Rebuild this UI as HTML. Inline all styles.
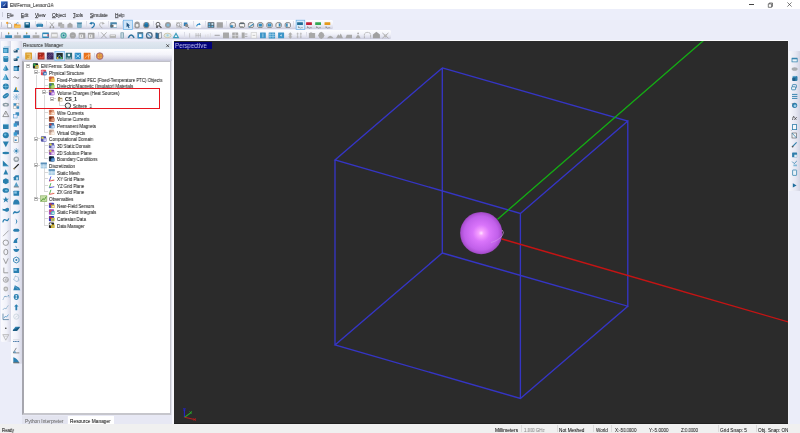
<!DOCTYPE html><html><head><meta charset="utf-8"><title>EMFerma_Lesson1A</title><style>
*{margin:0;padding:0;box-sizing:border-box}
html,body{width:800px;height:433px;overflow:hidden}
body{position:relative;background:#ebedf9;font-family:"Liberation Sans",sans-serif;color:#000}
.a{position:absolute}
.t{position:absolute;white-space:nowrap;line-height:1;transform-origin:0 0;will-change:transform;text-shadow:0 0.45px 0.35px rgba(0,0,0,.28)}
svg{position:absolute;overflow:visible}
</style></head><body>
<div class="a" style="left:0px;top:0px;width:800px;height:9.3px;background:#fff;"></div>
<svg style="left:0;top:0" width="10" height="10"><defs><linearGradient id="ti" x1="0" y1="0" x2="1" y2="1"><stop offset="0" stop-color="#3f7ad6"/><stop offset="1" stop-color="#0b1f66"/></linearGradient></defs><rect x="1" y="1.4" width="6.6" height="6.6" fill="url(#ti)"/><path d="M2.6 6.3L6.2 2.8L4.4 5.8Z" fill="#dfeaff"/></svg>
<div class="t" style="left:10.1px;top:3px;font-size:5.0px;transform:scaleX(0.924);color:#2a2a2a;">EMFerma_Lesson1A</div>
<div class="a" style="left:749.4px;top:4.3px;width:4.4px;height:0.7px;background:#444;"></div>
<svg style="left:767px;top:2px" width="7" height="6"><path d="M1.3 1.9h3.3v3.4h-3.3z M2.2 1.9v-0.9h3.3v3.4h-0.9" fill="none" stroke="#3a3a3a" stroke-width="0.65"/></svg>
<svg style="left:787px;top:2.3px" width="6" height="6"><path d="M0.4 0.4L4.6 4.6M4.6 0.4L0.4 4.6" stroke="#3a3a3a" stroke-width="0.65"/></svg>
<div class="a" style="left:0px;top:9.3px;width:800px;height:10.7px;background:#eceefa;"></div>
<div class="a" style="left:1.5px;top:11.5px;width:1px;height:5px;background:#cdcedb;"></div>
<div class="t" style="left:7.1px;top:14px;font-size:4.8px;transform:scaleX(0.860);color:#202020;"><span style="text-decoration:underline;text-decoration-thickness:0.4px;text-underline-offset:0.4px;text-decoration-color:rgba(0,0,0,.45)">F</span>ile</div>
<div class="t" style="left:21px;top:14px;font-size:4.8px;transform:scaleX(0.895);color:#202020;"><span style="text-decoration:underline;text-decoration-thickness:0.4px;text-underline-offset:0.4px;text-decoration-color:rgba(0,0,0,.45)">E</span>dit</div>
<div class="t" style="left:34.9px;top:14px;font-size:4.8px;transform:scaleX(1.008);color:#202020;"><span style="text-decoration:underline;text-decoration-thickness:0.4px;text-underline-offset:0.4px;text-decoration-color:rgba(0,0,0,.45)">V</span>iew</div>
<div class="t" style="left:51.75px;top:14px;font-size:4.8px;transform:scaleX(0.998);color:#202020;"><span style="text-decoration:underline;text-decoration-thickness:0.4px;text-underline-offset:0.4px;text-decoration-color:rgba(0,0,0,.45)">O</span>bject</div>
<div class="t" style="left:72.6px;top:14px;font-size:4.8px;transform:scaleX(0.884);color:#202020;"><span style="text-decoration:underline;text-decoration-thickness:0.4px;text-underline-offset:0.4px;text-decoration-color:rgba(0,0,0,.45)">T</span>ools</div>
<div class="t" style="left:89.8px;top:14px;font-size:4.8px;transform:scaleX(0.948);color:#202020;"><span style="text-decoration:underline;text-decoration-thickness:0.4px;text-underline-offset:0.4px;text-decoration-color:rgba(0,0,0,.45)">S</span>imulate</div>
<div class="t" style="left:114.5px;top:14px;font-size:4.8px;transform:scaleX(0.942);color:#202020;"><span style="text-decoration:underline;text-decoration-thickness:0.4px;text-underline-offset:0.4px;text-decoration-color:rgba(0,0,0,.45)">H</span>elp</div>
<div class="a" style="left:0px;top:19.9px;width:333px;height:9.4px;background:linear-gradient(#fdfdff,#f2f3fa 45%,#e0e1ee 75%,#c9cadc);border-radius:0 1.5px 1.5px 0"></div>
<div class="a" style="left:1.2px;top:21.7px;width:0.9px;height:5.800000000000001px;background:#c5c6d4;"></div>
<div class="a" style="left:0px;top:30.1px;width:390.5px;height:9.3px;background:linear-gradient(#fdfdff,#f2f3fa 45%,#e0e1ee 75%,#c9cadc);border-radius:0 1.5px 1.5px 0"></div>
<div class="a" style="left:1.2px;top:31.900000000000002px;width:0.9px;height:5.700000000000001px;background:#c5c6d4;"></div>
<div class="a" style="left:35px;top:21.4px;width:0.6px;height:6.6px;background:#dcdde7;"></div>
<div class="a" style="left:46px;top:21.4px;width:0.6px;height:6.6px;background:#dcdde7;"></div>
<div class="a" style="left:85.5px;top:21.4px;width:0.6px;height:6.6px;background:#dcdde7;"></div>
<div class="a" style="left:107.5px;top:21.4px;width:0.6px;height:6.6px;background:#dcdde7;"></div>
<div class="a" style="left:121.75px;top:21.4px;width:0.6px;height:6.6px;background:#dcdde7;"></div>
<div class="a" style="left:152.9px;top:21.4px;width:0.6px;height:6.6px;background:#dcdde7;"></div>
<div class="a" style="left:192.6px;top:21.4px;width:0.6px;height:6.6px;background:#dcdde7;"></div>
<div class="a" style="left:205.4px;top:21.4px;width:0.6px;height:6.6px;background:#dcdde7;"></div>
<div class="a" style="left:226.4px;top:21.4px;width:0.6px;height:6.6px;background:#dcdde7;"></div>
<div class="a" style="left:292.5px;top:21.4px;width:0.6px;height:6.6px;background:#dcdde7;"></div>
<div class="a" style="left:97.75px;top:31.6px;width:0.6px;height:6.6px;background:#dcdde7;"></div>
<div class="a" style="left:183.6px;top:31.6px;width:0.6px;height:6.6px;background:#dcdde7;"></div>
<div class="a" style="left:306.25px;top:31.6px;width:0.6px;height:6.6px;background:#dcdde7;"></div>
<div class="a" style="left:1px;top:41.3px;width:9.8px;height:300.7px;background:linear-gradient(90deg,#fbfbfe,#f0f1f9 55%,#d6d7e6);border-radius:0 0 1.5px 1.5px"></div>
<div class="a" style="left:3px;top:42.5px;width:5.800000000000001px;height:0.7px;background:repeating-linear-gradient(90deg,#b8b9c8 0 0.8px,transparent 0.8px 1.6px);"></div>
<div class="a" style="left:11.1px;top:41.3px;width:10.6px;height:322.9px;background:linear-gradient(90deg,#fbfbfe,#f0f1f9 55%,#d6d7e6);border-radius:0 0 1.5px 1.5px"></div>
<div class="a" style="left:13.1px;top:42.5px;width:6.6px;height:0.7px;background:repeating-linear-gradient(90deg,#b8b9c8 0 0.8px,transparent 0.8px 1.6px);"></div>
<div class="a" style="left:21.6px;top:41px;width:151px;height:383.4px;background:#e7e8f4;"></div>
<div class="a" style="left:21.6px;top:41.5px;width:150.6px;height:7.6px;background:linear-gradient(#e0e8f1,#d6e0ea);"></div>
<div class="t" style="left:23px;top:43px;font-size:5.0px;transform:scaleX(0.941);color:#333333;">Resource Manager</div>
<svg style="left:166px;top:43.6px" width="4" height="4"><path d="M0.3 0.3L3.1 3.1M3.1 0.3L0.3 3.1" stroke="#222" stroke-width="0.7"/></svg>
<div class="a" style="left:22.4px;top:49.1px;width:149.4px;height:12.2px;background:linear-gradient(#fdfdff,#f4f4fa 45%,#dcdce9 80%,#c6c6d9);"></div>
<div class="a" style="left:35px;top:52.5px;width:0.7px;height:7px;background:#d6d6e2;"></div>
<div class="a" style="left:93.5px;top:52.5px;width:0.7px;height:7px;background:#d6d6e2;"></div>
<div class="a" style="left:22.2px;top:61.2px;width:148.4px;height:353.6px;background:#fff;border-left:2.3px solid #a6a6ae;border-top:0.8px solid #c0c0c8;border-bottom:2.2px solid #c6c6cc;border-right:0.9px solid #c4c4cc"></div>
<div class="a" style="left:170.6px;top:61px;width:1.6px;height:354px;background:linear-gradient(90deg,#e6e7f1,#d9dae6);"></div>
<div class="a" style="left:36px;top:75px;width:1px;height:122px;background:#dadada;"></div>
<div class="a" style="left:44px;top:95px;width:1px;height:38px;background:#dadada;"></div>
<div class="a" style="left:44px;top:142px;width:1px;height:17px;background:#dadada;"></div>
<div class="a" style="left:44px;top:168px;width:1px;height:24px;background:#dadada;"></div>
<div class="a" style="left:44px;top:202px;width:1px;height:24px;background:#dadada;"></div>
<div class="a" style="left:44px;top:75px;width:1px;height:15px;background:#dadada;"></div>
<div class="a" style="left:59px;top:101px;width:1px;height:5px;background:#dadada;"></div>
<div class="a" style="left:25.75px;top:63.7px;width:4.1px;height:4.1px;background:#fff;border:0.55px solid #c2c2c2"></div>
<div class="a" style="left:26.7px;top:65.45px;width:2.3px;height:0.6px;background:#8c8c8c;"></div>
<div class="t" style="left:41px;top:65px;font-size:4.7px;transform:scaleX(0.925);color:#1c1c1c;">EM Ferma: Static Module</div>
<div class="a" style="left:38px;top:72px;width:2px;height:1px;background:#d8d8d8;"></div>
<div class="a" style="left:33.75px;top:70.34400000000001px;width:4.1px;height:4.1px;background:#fff;border:0.55px solid #c2c2c2"></div>
<div class="a" style="left:34.699999999999996px;top:72.09400000000001px;width:2.3px;height:0.6px;background:#8c8c8c;"></div>
<div class="t" style="left:49px;top:72px;font-size:4.7px;transform:scaleX(0.925);color:#1c1c1c;">Physical Structure</div>
<div class="a" style="left:44px;top:79px;width:4px;height:1px;background:#d8d8d8;"></div>
<div class="t" style="left:57px;top:79px;font-size:4.7px;transform:scaleX(0.925);color:#1c1c1c;">Fixed-Potential PEC (Fixed-Temperature PTC) Objects</div>
<div class="a" style="left:44px;top:85px;width:4px;height:1px;background:#d8d8d8;"></div>
<div class="t" style="left:57px;top:85px;font-size:4.7px;transform:scaleX(0.925);color:#1c1c1c;">Dielectric/Magnetic (Insulator) Materials</div>
<div class="a" style="left:46px;top:92px;width:2px;height:1px;background:#d8d8d8;"></div>
<div class="a" style="left:41.75px;top:90.276px;width:4.1px;height:4.1px;background:#fff;border:0.55px solid #c2c2c2"></div>
<div class="a" style="left:42.699999999999996px;top:92.026px;width:2.3px;height:0.6px;background:#8c8c8c;"></div>
<div class="t" style="left:57px;top:92px;font-size:4.7px;transform:scaleX(0.925);color:#1c1c1c;">Volume Charges (Heat Sources)</div>
<div class="a" style="left:54px;top:98px;width:2px;height:1px;background:#d8d8d8;"></div>
<div class="a" style="left:49.75px;top:96.92px;width:4.1px;height:4.1px;background:#fff;border:0.55px solid #c2c2c2"></div>
<div class="a" style="left:50.699999999999996px;top:98.67px;width:2.3px;height:0.6px;background:#8c8c8c;"></div>
<div class="t" style="left:65px;top:97px;font-size:5.2px;transform:scaleX(0.9225579842108044);color:#1c1c1c;font-weight:bold;">CS_1</div>
<div class="a" style="left:60px;top:105px;width:5px;height:1px;background:#d8d8d8;"></div>
<div class="t" style="left:73px;top:105px;font-size:4.7px;transform:scaleX(0.925);color:#1c1c1c;">Sphere_1</div>
<div class="a" style="left:44px;top:112px;width:4px;height:1px;background:#d8d8d8;"></div>
<div class="t" style="left:57px;top:112px;font-size:4.7px;transform:scaleX(0.925);color:#1c1c1c;">Wire Currents</div>
<div class="a" style="left:44px;top:118px;width:4px;height:1px;background:#d8d8d8;"></div>
<div class="t" style="left:57px;top:118px;font-size:4.7px;transform:scaleX(0.925);color:#1c1c1c;">Volume Currents</div>
<div class="a" style="left:44px;top:125px;width:4px;height:1px;background:#d8d8d8;"></div>
<div class="t" style="left:57px;top:125px;font-size:4.7px;transform:scaleX(0.925);color:#1c1c1c;">Permanent Magnets</div>
<div class="a" style="left:44px;top:132px;width:4px;height:1px;background:#d8d8d8;"></div>
<div class="t" style="left:57px;top:132px;font-size:4.7px;transform:scaleX(0.925);color:#1c1c1c;">Virtual Objects</div>
<div class="a" style="left:38px;top:138px;width:2px;height:1px;background:#d8d8d8;"></div>
<div class="a" style="left:33.75px;top:136.784px;width:4.1px;height:4.1px;background:#fff;border:0.55px solid #c2c2c2"></div>
<div class="a" style="left:34.699999999999996px;top:138.534px;width:2.3px;height:0.6px;background:#8c8c8c;"></div>
<div class="t" style="left:49px;top:138px;font-size:4.7px;transform:scaleX(0.925);color:#1c1c1c;">Computational Domain</div>
<div class="a" style="left:44px;top:145px;width:4px;height:1px;background:#d8d8d8;"></div>
<div class="t" style="left:57px;top:145px;font-size:4.7px;transform:scaleX(0.925);color:#1c1c1c;">3D Static Domain</div>
<div class="a" style="left:44px;top:152px;width:4px;height:1px;background:#d8d8d8;"></div>
<div class="t" style="left:57px;top:152px;font-size:4.7px;transform:scaleX(0.925);color:#1c1c1c;">2D Solution Plane</div>
<div class="a" style="left:44px;top:158px;width:4px;height:1px;background:#d8d8d8;"></div>
<div class="t" style="left:57px;top:158px;font-size:4.7px;transform:scaleX(0.925);color:#1c1c1c;">Boundary Conditions</div>
<div class="a" style="left:38px;top:165px;width:2px;height:1px;background:#d8d8d8;"></div>
<div class="a" style="left:33.75px;top:163.35999999999999px;width:4.1px;height:4.1px;background:#fff;border:0.55px solid #c2c2c2"></div>
<div class="a" style="left:34.699999999999996px;top:165.10999999999999px;width:2.3px;height:0.6px;background:#8c8c8c;"></div>
<div class="t" style="left:49px;top:165px;font-size:4.7px;transform:scaleX(0.925);color:#1c1c1c;">Discretization</div>
<div class="a" style="left:44px;top:172px;width:4px;height:1px;background:#d8d8d8;"></div>
<div class="t" style="left:57px;top:172px;font-size:4.7px;transform:scaleX(0.925);color:#1c1c1c;">Static Mesh</div>
<div class="a" style="left:44px;top:178px;width:4px;height:1px;background:#d8d8d8;"></div>
<div class="t" style="left:57px;top:178px;font-size:4.7px;transform:scaleX(0.925);color:#1c1c1c;">XY Grid Plane</div>
<div class="a" style="left:44px;top:185px;width:4px;height:1px;background:#d8d8d8;"></div>
<div class="t" style="left:57px;top:185px;font-size:4.7px;transform:scaleX(0.925);color:#1c1c1c;">YZ Grid Plane</div>
<div class="a" style="left:44px;top:191px;width:4px;height:1px;background:#d8d8d8;"></div>
<div class="t" style="left:57px;top:191px;font-size:4.7px;transform:scaleX(0.925);color:#1c1c1c;">ZX Grid Plane</div>
<div class="a" style="left:38px;top:198px;width:2px;height:1px;background:#d8d8d8;"></div>
<div class="a" style="left:33.75px;top:196.57999999999998px;width:4.1px;height:4.1px;background:#fff;border:0.55px solid #c2c2c2"></div>
<div class="a" style="left:34.699999999999996px;top:198.32999999999998px;width:2.3px;height:0.6px;background:#8c8c8c;"></div>
<div class="t" style="left:49px;top:198px;font-size:4.7px;transform:scaleX(0.925);color:#1c1c1c;">Observables</div>
<div class="a" style="left:44px;top:205px;width:4px;height:1px;background:#d8d8d8;"></div>
<div class="t" style="left:57px;top:205px;font-size:4.7px;transform:scaleX(0.925);color:#1c1c1c;">Near-Field Sensors</div>
<div class="a" style="left:44px;top:211px;width:4px;height:1px;background:#d8d8d8;"></div>
<div class="t" style="left:57px;top:211px;font-size:4.7px;transform:scaleX(0.925);color:#1c1c1c;">Static Field Integrals</div>
<div class="a" style="left:44px;top:218px;width:4px;height:1px;background:#d8d8d8;"></div>
<div class="t" style="left:57px;top:218px;font-size:4.7px;transform:scaleX(0.925);color:#1c1c1c;">Cartesian Data</div>
<div class="a" style="left:44px;top:225px;width:4px;height:1px;background:#d8d8d8;"></div>
<div class="t" style="left:57px;top:225px;font-size:4.7px;transform:scaleX(0.925);color:#1c1c1c;">Data Manager</div>
<div class="a" style="left:35.2px;top:88.1px;width:124.4px;height:20.8px;background:transparent;border:1.3px solid #e8141e"></div>
<div class="a" style="left:22.4px;top:416.4px;width:44.6px;height:7.6px;background:#e3e4ef;"></div>
<div class="t" style="left:25px;top:420px;font-size:4.6px;transform:scaleX(1.046);color:#7a7a7a;">Python Interpreter</div>
<div class="a" style="left:68px;top:416.2px;width:45.6px;height:7.9px;background:#fff;"></div>
<div class="t" style="left:70px;top:420px;font-size:4.8px;transform:scaleX(0.992);color:#151515;">Resource Manager</div>
<div class="a" style="left:172.2px;top:41px;width:1.9px;height:383px;background:#f7f7fc;"></div>
<div class="a" style="left:172.2px;top:40.1px;width:616px;height:0.9px;background:#fafafd;"></div>
<div class="a" style="left:174px;top:40.9px;width:614.2px;height:382.7px;background:#2b2b2b;"></div>
<div class="a" style="left:174px;top:422.6px;width:614.2px;height:1px;background:#202020;"></div>
<div class="a" style="left:174px;top:42px;width:38px;height:6.9px;background:#000078;"></div>
<div class="t" style="left:174.5px;top:43px;font-size:6.3px;transform:scaleX(0.960);color:#c4c4f2;text-shadow:none;">Perspective</div>
<svg style="left:174px;top:41px;overflow:hidden" width="614.2" height="382.6" viewBox="174 41 614.2 382.6">
<defs>
<radialGradient id="sg" cx="0.5" cy="0.5" r="0.5">
<stop offset="0" stop-color="#ffe4ff"/>
<stop offset="0.12" stop-color="#f6a2ff"/>
<stop offset="0.4" stop-color="#d974fa"/>
<stop offset="0.8" stop-color="#c160ea"/>
<stop offset="0.94" stop-color="#ac50d2"/>
<stop offset="1" stop-color="#9646b8"/>
</radialGradient>
</defs>
<g fill="none" stroke-width="1.35" stroke-linecap="round">
<path d="M442.3 67.9L627.8 121L520.4 213.4L335 160Z M442.3 253L627.8 306.2L520.4 398.4L335 345Z M442.3 67.9V253 M627.8 121V306.2 M520.4 213.4V398.4 M335 160V345" stroke="#3535c4"/>
<path d="M497.9 219L703 41" stroke="#14ac14"/>
<path d="M502 239L790 322.5" stroke="#c41414"/>
</g>
<circle cx="481.2" cy="233.1" r="21.1" fill="url(#sg)"/>
<path d="M502.2 230 Q504.6 232.4 502.4 235.4 Q499 240.2 491 242.6" stroke="#d496ea" stroke-width="0.9" fill="none" opacity="0.75"/>
</svg>
<svg style="left:180px;top:405px" width="20" height="18" viewBox="0 0 20 18">
<path d="M4.4 4.2V12.3" stroke="#2424c8" stroke-width="1.1"/><path d="M3 3.8H5.8M3.4 5.2H5.4" stroke="#2424c8" stroke-width="0.9"/>
<path d="M4.6 12.3L11.4 7.4" stroke="#2aa82a" stroke-width="1.1"/><path d="M9.6 6.4L11.6 8.6M11.8 6.2L9.4 8.8" stroke="#2aa82a" stroke-width="0.8"/>
<path d="M4.6 12.3L15.6 14.8" stroke="#b41e1e" stroke-width="1.1"/><path d="M13.6 13.2L15.8 15.8M15.8 13.2L13.6 15.8" stroke="#b41e1e" stroke-width="0.8"/>
</svg>
<div class="a" style="left:788.2px;top:41px;width:1px;height:383.5px;background:#f3f3f8;"></div>
<div class="a" style="left:789.2px;top:51.4px;width:10.8px;height:139.4px;background:linear-gradient(90deg,#f6f7fc,#e6e7f2 60%,#d3d4e3);"></div>
<div class="a" style="left:791px;top:52.6px;width:8px;height:0.7px;background:repeating-linear-gradient(90deg,#b8b9c8 0 0.8px,transparent 0.8px 1.6px);"></div>
<div class="a" style="left:0px;top:424.3px;width:800px;height:8.7px;background:#f0f0f0;"></div>
<div class="t" style="left:2px;top:429px;font-size:4.8px;transform:scaleX(0.865);color:#111111;">Ready</div>
<div class="t" style="left:495.3px;top:429px;font-size:4.6px;transform:scaleX(1.051);color:#111111;">Millimeters</div>
<div class="t" style="left:523.7px;top:429px;font-size:4.6px;transform:scaleX(0.932);color:#9a9a9a;">1.000 GHz</div>
<div class="t" style="left:559px;top:429px;font-size:4.6px;transform:scaleX(1.028);color:#111111;">Not Meshed</div>
<div class="t" style="left:595.6px;top:429px;font-size:4.6px;transform:scaleX(0.998);color:#262626;">World</div>
<div class="t" style="left:615px;top:429px;font-size:4.6px;transform:scaleX(0.955);color:#262626;">X:-50.0000</div>
<div class="t" style="left:649px;top:429px;font-size:4.6px;transform:scaleX(0.990);color:#262626;">Y:-5.0000</div>
<div class="t" style="left:681px;top:429px;font-size:4.6px;transform:scaleX(0.942);color:#262626;">Z:0.0000</div>
<div class="t" style="left:720px;top:429px;font-size:4.6px;transform:scaleX(1.042);color:#262626;">Grid Snap: 5</div>
<div class="t" style="left:758px;top:429px;font-size:4.6px;transform:scaleX(1.020);color:#262626;">Obj. Snap: ON</div>
<div class="a" style="left:521px;top:425.3px;width:0.7px;height:7.2px;background:#dadada;"></div>
<div class="a" style="left:557px;top:425.3px;width:0.7px;height:7.2px;background:#dadada;"></div>
<div class="a" style="left:593px;top:425.3px;width:0.7px;height:7.2px;background:#dadada;"></div>
<div class="a" style="left:611px;top:425.3px;width:0.7px;height:7.2px;background:#dadada;"></div>
<div class="a" style="left:718px;top:425.3px;width:0.7px;height:7.2px;background:#dadada;"></div>
<div class="a" style="left:755.6px;top:425.3px;width:0.7px;height:7.2px;background:#dadada;"></div>
<div class="t" style="left:792px;top:116px;font-size:5.2px;transform:scaleX(1.261);color:#333;font-style:italic;text-shadow:none;">fx</div>
<svg style="left:0;top:0" width="800" height="433" viewBox="0 0 800 433"><rect x="32.90" y="63.15" width="5.2" height="5.4" rx="0.8" fill="#1c2a28"/><rect x="34.90" y="64.95" width="3.8" height="3.6" rx="0.6" fill="#e0c040" opacity=".9"/><circle cx="34.50" cy="64.75" r="1.2" fill="#30b050" opacity=".9"/><circle cx="37.10" cy="67.05" r="0.9" fill="#90c0e0" opacity=".8"/><rect x="40.90" y="69.79" width="5.2" height="5.4" rx="0.8" fill="#e04858"/><rect x="42.90" y="71.59" width="3.8" height="3.6" rx="0.6" fill="#2a7ac0" opacity=".9"/><circle cx="42.50" cy="71.39" r="1.2" fill="#f0a0b0" opacity=".9"/><circle cx="45.10" cy="73.69" r="0.9" fill="#ffffff" opacity=".8"/><rect x="48.90" y="76.44" width="5.2" height="5.4" rx="0.8" fill="#d87838"/><rect x="50.90" y="78.24" width="3.8" height="3.6" rx="0.6" fill="#f0c040" opacity=".9"/><circle cx="50.50" cy="78.04" r="1.2" fill="#c05050" opacity=".9"/><circle cx="53.10" cy="80.34" r="0.9" fill="#f8d0a0" opacity=".8"/><rect x="48.90" y="83.08" width="5.2" height="5.4" rx="0.8" fill="#60a040"/><rect x="50.90" y="84.88" width="3.8" height="3.6" rx="0.6" fill="#a0d060" opacity=".9"/><circle cx="50.50" cy="84.68" r="1.2" fill="#4060a0" opacity=".9"/><circle cx="53.10" cy="86.98" r="0.9" fill="#c0e080" opacity=".8"/><rect x="48.90" y="89.73" width="5.2" height="5.4" rx="0.8" fill="#6040a0"/><rect x="50.90" y="91.53" width="3.8" height="3.6" rx="0.6" fill="#c080e0" opacity=".9"/><circle cx="50.50" cy="91.33" r="1.2" fill="#e0a040" opacity=".9"/><circle cx="53.10" cy="93.63" r="0.9" fill="#ffffff" opacity=".8"/><rect x="57.90" y="97.77" width="4.4" height="3.6" fill="#a08a60"/><rect x="59.90" y="98.97" width="2.4" height="2.4" fill="#f0ead8"/><rect x="58.30" y="96.97" width="1.6" height="1" fill="#705a3a"/><circle cx="67.90" cy="105.71" r="2.7" fill="#e8ece8" stroke="#2a2f33" stroke-width="0.9"/><circle cx="67.50" cy="105.31" r="1.1" fill="#fafafa"/><rect x="48.90" y="109.66" width="5.2" height="5.4" rx="0.8" fill="#d89070"/><rect x="50.90" y="111.46" width="3.8" height="3.6" rx="0.6" fill="#f0c0a0" opacity=".9"/><circle cx="50.50" cy="111.26" r="1.2" fill="#c06040" opacity=".9"/><circle cx="53.10" cy="113.56" r="0.9" fill="#ffffff" opacity=".8"/><rect x="48.90" y="116.30" width="5.2" height="5.4" rx="0.8" fill="#a85030"/><rect x="50.90" y="118.10" width="3.8" height="3.6" rx="0.6" fill="#d08060" opacity=".9"/><circle cx="50.50" cy="117.90" r="1.2" fill="#703020" opacity=".9"/><circle cx="53.10" cy="120.20" r="0.9" fill="#f0c0a0" opacity=".8"/><rect x="48.90" y="122.95" width="5.2" height="5.4" rx="0.8" fill="#3a6aa0"/><rect x="50.90" y="124.75" width="3.8" height="3.6" rx="0.6" fill="#80b0e0" opacity=".9"/><circle cx="50.50" cy="124.55" r="1.2" fill="#c04040" opacity=".9"/><circle cx="53.10" cy="126.85" r="0.9" fill="#ffffff" opacity=".8"/><rect x="48.90" y="129.59" width="5.2" height="5.4" rx="0.8" fill="#d0b0a0"/><rect x="50.90" y="131.39" width="3.8" height="3.6" rx="0.6" fill="#f0e0d0" opacity=".9"/><circle cx="50.50" cy="131.19" r="1.2" fill="#b09080" opacity=".9"/><circle cx="53.10" cy="133.49" r="0.9" fill="#ffffff" opacity=".8"/><rect x="40.90" y="136.23" width="5.2" height="5.4" rx="0.8" fill="#5050a0"/><rect x="42.90" y="138.03" width="3.8" height="3.6" rx="0.6" fill="#a0a0e0" opacity=".9"/><circle cx="42.50" cy="137.83" r="1.2" fill="#e0e040" opacity=".9"/><circle cx="45.10" cy="140.13" r="0.9" fill="#ffffff" opacity=".8"/><rect x="48.90" y="142.88" width="5.2" height="5.4" rx="0.8" fill="#5050a0"/><rect x="50.90" y="144.68" width="3.8" height="3.6" rx="0.6" fill="#a0a0e0" opacity=".9"/><circle cx="50.50" cy="144.48" r="1.2" fill="#e0e040" opacity=".9"/><circle cx="53.10" cy="146.78" r="0.9" fill="#ffffff" opacity=".8"/><rect x="48.90" y="149.52" width="5.2" height="5.4" rx="0.8" fill="#9050b0"/><rect x="50.90" y="151.32" width="3.8" height="3.6" rx="0.6" fill="#d0a0e0" opacity=".9"/><circle cx="50.50" cy="151.12" r="1.2" fill="#e0e040" opacity=".9"/><circle cx="53.10" cy="153.42" r="0.9" fill="#ffffff" opacity=".8"/><rect x="48.90" y="156.17" width="5.2" height="5.4" rx="0.8" fill="#1a3050"/><rect x="50.90" y="157.97" width="3.8" height="3.6" rx="0.6" fill="#4080c0" opacity=".9"/><circle cx="50.50" cy="157.77" r="1.2" fill="#101820" opacity=".9"/><circle cx="53.10" cy="160.07" r="0.9" fill="#80c0f0" opacity=".8"/><rect x="40.70" y="162.61" width="6.2" height="5.8" fill="#a8cce4"/><rect x="40.70" y="162.61" width="6.2" height="1.6" fill="#5a8fb8"/><path d="M40.70 166.21h6.2M43.80 164.21v4.2" stroke="#e8f2fa" stroke-width="0.5"/><rect x="48.70" y="169.25" width="6.2" height="5.8" fill="#a8cce4"/><rect x="48.70" y="169.25" width="6.2" height="1.6" fill="#5a8fb8"/><path d="M48.70 172.85h6.2M51.80 170.85v4.2" stroke="#e8f2fa" stroke-width="0.5"/><path d="M49.30 181.10L50.90 176.50" stroke="#3030e0" stroke-width="0.8" fill="none"/><path d="M49.30 181.10L54.30 180.10" stroke="#e03030" stroke-width="0.8" fill="none"/><path d="M49.90 179.10l1 1M52.90 179.30l1 1" stroke="#c8b040" stroke-width="0.6" fill="none"/><path d="M49.30 187.74L50.90 183.14" stroke="#30a030" stroke-width="0.8" fill="none"/><path d="M49.30 187.74L54.30 186.74" stroke="#3030e0" stroke-width="0.8" fill="none"/><path d="M49.90 185.74l1 1M52.90 185.94l1 1" stroke="#c8b040" stroke-width="0.6" fill="none"/><path d="M49.30 194.39L50.90 189.79" stroke="#30a030" stroke-width="0.8" fill="none"/><path d="M49.30 194.39L54.30 193.39" stroke="#e03030" stroke-width="0.8" fill="none"/><path d="M49.90 192.39l1 1M52.90 192.59l1 1" stroke="#c8b040" stroke-width="0.6" fill="none"/><rect x="40.70" y="195.83" width="6.2" height="5.8" fill="#c8e0a8" stroke="#6a9a40" stroke-width="0.5"/><path d="M41.30 201.03l1.6-2.4 1.4 1 2-3" stroke="#3a8a20" stroke-width="0.8" fill="none"/><rect x="48.90" y="202.67" width="5.2" height="5.4" rx="0.8" fill="#4040c0"/><rect x="50.90" y="204.47" width="3.8" height="3.6" rx="0.6" fill="#e0c040" opacity=".9"/><circle cx="50.50" cy="204.27" r="1.2" fill="#c04040" opacity=".9"/><circle cx="53.10" cy="206.57" r="0.9" fill="#ffffff" opacity=".8"/><rect x="48.90" y="209.32" width="5.2" height="5.4" rx="0.8" fill="#a050c0"/><rect x="50.90" y="211.12" width="3.8" height="3.6" rx="0.6" fill="#50c0c0" opacity=".9"/><circle cx="50.50" cy="210.92" r="1.2" fill="#e05050" opacity=".9"/><circle cx="53.10" cy="213.22" r="0.9" fill="#ffffff" opacity=".8"/><rect x="48.90" y="215.96" width="5.2" height="5.4" rx="0.8" fill="#3030c0"/><rect x="50.90" y="217.76" width="3.8" height="3.6" rx="0.6" fill="#e0c040" opacity=".9"/><circle cx="50.50" cy="217.56" r="1.2" fill="#c03030" opacity=".9"/><circle cx="53.10" cy="219.86" r="0.9" fill="#60c060" opacity=".8"/><rect x="48.90" y="222.61" width="5.2" height="5.4" rx="0.8" fill="#202020"/><rect x="50.90" y="224.41" width="3.8" height="3.6" rx="0.6" fill="#e0c020" opacity=".9"/><circle cx="50.50" cy="224.21" r="1.2" fill="#ffffff" opacity=".9"/><circle cx="53.10" cy="226.51" r="0.9" fill="#b0b0b0" opacity=".8"/><path d="M7.6 23.2h2.6l1.4 1.4v3.2h-4z" fill="#fff" stroke="#777" stroke-width="0.55"/><circle cx="7.2" cy="22.9" r="1.1" fill="#f0a030" /><path d="M14.2 23.8h2.4l0.6 0.7h3.3v3.2h-6.3z" fill="#e89a2a" /><path d="M15.2 25.6h5.4l-0.8 2.1h-5z" fill="#f6c35a" /><path d="M16.2 23.6q1-1.3 2.4-0.6" fill="none" stroke="#3a86c0" stroke-width="0.7" /><rect x="24.40" y="22.30" width="5.6" height="5.4" rx="0.5" fill="#1a6890"/><rect x="25.70" y="22.80" width="3" height="1.6" rx="0" fill="#cfe3ee"/><rect x="25.50" y="25.80" width="3.4" height="1.6" rx="0" fill="#0f4d6e"/><rect x="37.80" y="22.30" width="3.8" height="1.8" rx="0.2" fill="#dde6ec"/><rect x="36.30" y="23.80" width="6.8" height="3.2" rx="1.2" fill="#2a7aa8"/><rect x="37.20" y="24.50" width="5" height="0.8" rx="0.3" fill="#5aa8d0"/><rect x="37.80" y="26.80" width="3.8" height="1.2" rx="0.2" fill="#f4f6f8"/><path d="M50 22.5L53.8 27M53.8 22.5L50 27" fill="none" stroke="#9a9a9a" stroke-width="0.8" /><circle cx="50.4" cy="27.4" r="0.9" fill="#9a9a9a" /><circle cx="53.4" cy="27.4" r="0.9" fill="#9a9a9a" /><rect x="58.20" y="22.40" width="4" height="4" rx="0.3" fill="#a8a8a8"/><rect x="60.20" y="24.00" width="4" height="4" rx="0.3" fill="#b4b4b4"/><path d="M67.4 24.4l2.6-2 2.6 2v3.4h-5.2z" fill="#a8a8a8" /><rect x="77.20" y="23.00" width="4.4" height="4.8" rx="0.4" fill="#5f9ab5"/><rect x="76.80" y="22.40" width="5.2" height="1" rx="0.2" fill="#3a7a9a"/><path d="M78.4 24.2v3M79.4 24.2v3M80.4 24.2v3" fill="none" stroke="#c5dde8" stroke-width="0.4" /><path d="M90.8 23.4q3.6-1.6 3.6 1.4q0 1.8-2.8 3.2" fill="none" stroke="#1d72a8" stroke-width="1.2" /><path d="M89.2 23.6l2.4-1.8 0.2 3z" fill="#1d72a8" /><path d="M103.2 23.4q-3.6-1.6-3.6 1.4q0 1.8 2.8 3.2" fill="none" stroke="#b4b4b4" stroke-width="1.0" /><path d="M104.8 23.6l-2.4-1.8-0.2 3z" fill="#b4b4b4" /><rect x="110.30" y="22.30" width="6.6" height="5.4" rx="0.4" fill="#4b88ad"/><rect x="112.10" y="24.30" width="4.6" height="3" rx="0" fill="#ffffff"/><rect x="110.50" y="24.80" width="3" height="2.4" rx="0.6" fill="#606a70"/><rect x="123.3" y="20.2" width="9.3" height="9.3" fill="#cfe5f8" stroke="#67aee6" stroke-width="0.7"/><path d="M126.6 22.4l3.4 3.2-1.5 0.2 1 2-0.8 0.4-1-2-1.1 1z" fill="#1a4f80" /><path d="M134.4 24.2q0-2.6 2.7-2.6t2.7 2.6v2.4q0 2-2.7 2t-2.7-2z" fill="#9c9c9c" /><rect x="135.80" y="24.10" width="2.6" height="2.6" rx="1" fill="#f2f2f2"/><circle cx="146.3" cy="25.2" r="3.1" fill="#8a8a8a" /><circle cx="146.3" cy="25.2" r="2.1" fill="#1e6fa0" /><rect x="145.00" y="22.50" width="2.6" height="1.8" rx="0.4" fill="#2b8ac0"/><circle cx="158" cy="24.2" r="1.9" fill="none" stroke="#555" stroke-width="0.9"/><path d="M159.4 25.8L161.4 27.8" fill="none" stroke="#444" stroke-width="1.1" /><rect x="156.10" y="26.20" width="1.8" height="1.6" rx="0.4" fill="#333"/><circle cx="168" cy="25" r="3" fill="#9a9a9a" /><circle cx="168" cy="25" r="1.6" fill="#7fb8d8" /><path d="M176.6 22.5h5v5h-5z" fill="none" stroke="#b8b8b8" stroke-width="0.6" /><circle cx="178.3" cy="24.7" r="1.6" fill="none" stroke="#888" stroke-width="0.7"/><path d="M179.5 26L181 27.5" fill="none" stroke="#666" stroke-width="0.8" /><rect x="183.80" y="22.40" width="3.6" height="3.6" rx="0.3" fill="#2f7fb8"/><circle cx="186.6" cy="25.4" r="1.6" fill="#8a8a8a" /><path d="M187.8 26.6L189 27.9" fill="none" stroke="#555" stroke-width="0.9" /><rect x="195.60" y="22.20" width="5.6" height="5.6" rx="0.5" fill="#fafafa"/><path d="M196.6 26.4q0.6-2.8 3.2-2.2" fill="none" stroke="#2a86c8" stroke-width="1.1" /><path d="M199.2 22.8l1.6 1.6-2 0.8z" fill="#2a86c8" /><rect x="207.70" y="22.20" width="6.6" height="5.6" rx="0.4" fill="#4d5a63"/><rect x="208.40" y="23.10" width="2" height="1.8" rx="0" fill="#62b4e0"/><rect x="211.40" y="23.10" width="2" height="1.8" rx="0" fill="#cfe8f5"/><rect x="208.40" y="25.60" width="2" height="1.6" rx="0" fill="#62b4e0"/><rect x="211.40" y="25.60" width="2" height="1.6" rx="0" fill="#62b4e0"/><rect x="216.70" y="22.20" width="6.2" height="5.6" rx="0.3" fill="#a2a2a2"/><path d="M231.25 22.20H234.25L235.85 23.80V26.40L234.25 28.00H231.25L229.65 26.40V23.80Z" fill="#7c7c7c" /><path d="M231.45 23.00H234.05L235.05 24.00V26.20L234.05 27.20H231.45L230.45 26.20V24.00Z" fill="#d4d4d4" /><rect x="230.25" y="25.20" width="2.6" height="2.2" rx="0.3" fill="#2f8ac0"/><rect x="232.25" y="23.20" width="2.2" height="1.8" rx="0.5" fill="#f6f6f6"/><path d="M240.50 22.20H243.50L245.10 23.80V26.40L243.50 28.00H240.50L238.90 26.40V23.80Z" fill="#7c7c7c" /><path d="M240.70 23.00H243.30L244.30 24.00V26.20L243.30 27.20H240.70L239.70 26.20V24.00Z" fill="#d4d4d4" /><rect x="239.70" y="22.90" width="4.6" height="1.2" rx="0.3" fill="#5a6a74"/><rect x="240.00" y="24.50" width="4" height="1.6" rx="0" fill="#f8f8f8"/><rect x="239.90" y="26.20" width="3" height="1" rx="0" fill="#9a9a9a"/><path d="M249.50 22.20H252.50L254.10 23.80V26.40L252.50 28.00H249.50L247.90 26.40V23.80Z" fill="#7c7c7c" /><path d="M249.70 23.00H252.30L253.30 24.00V26.20L252.30 27.20H249.70L248.70 26.20V24.00Z" fill="#d4d4d4" /><path d="M248.6 26.900000000000002l4.8-3.6v1.4l-4.8 3z" fill="#2f8ac0" /><path d="M248.6 25.5l3.6-2.6h1.2l-4.8 3.6z" fill="#f8f8f8" /><path d="M258.80 22.20H261.80L263.40 23.80V26.40L261.80 28.00H258.80L257.20 26.40V23.80Z" fill="#7c7c7c" /><path d="M259.00 23.00H261.60L262.60 24.00V26.20L261.60 27.20H259.00L258.00 26.20V24.00Z" fill="#d4d4d4" /><rect x="258.70" y="23.70" width="3.2" height="2.8" rx="0.3" fill="#2f8ac0"/><path d="M268.00 22.20H271.00L272.60 23.80V26.40L271.00 28.00H268.00L266.40 26.40V23.80Z" fill="#7c7c7c" /><path d="M268.20 23.00H270.80L271.80 24.00V26.20L270.80 27.20H268.20L267.20 26.20V24.00Z" fill="#d4d4d4" /><rect x="267.80" y="23.60" width="3.4" height="3" rx="0.3" fill="#2f8ac0"/><rect x="268.70" y="24.20" width="1.6" height="1" rx="0" fill="#5fb0e0"/><path d="M277.10 22.20H280.10L281.70 23.80V26.40L280.10 28.00H277.10L275.50 26.40V23.80Z" fill="#7c7c7c" /><path d="M277.30 23.00H279.90L280.90 24.00V26.20L279.90 27.20H277.30L276.30 26.20V24.00Z" fill="#d4d4d4" /><rect x="276.80" y="23.50" width="1.8" height="3.2" rx="0.2" fill="#f4f4f4"/><rect x="278.80" y="23.60" width="1.6" height="3" rx="0.2" fill="#2f8ac0"/><path d="M286.30 22.20H289.30L290.90 23.80V26.40L289.30 28.00H286.30L284.70 26.40V23.80Z" fill="#7c7c7c" /><path d="M286.50 23.00H289.10L290.10 24.00V26.20L289.10 27.20H286.50L285.50 26.20V24.00Z" fill="#d4d4d4" /><rect x="286.10" y="23.50" width="1.6" height="3.2" rx="0.2" fill="#2f8ac0"/><rect x="287.90" y="23.60" width="1.8" height="3" rx="0.2" fill="#f4f4f4"/><rect x="296.1" y="20.2" width="8.7" height="9.3" fill="#d8ecfb" stroke="#67aee6" stroke-width="0.7"/><rect x="297.10" y="22.30" width="5.8" height="2.8" rx="0.3" fill="#236e96"/><path d="M298.6 27.8q0.5-1 1-0.1t1.8 0h1.4" fill="none" stroke="#555" stroke-width="0.45" /><path d="M298.6 26.2v1.8" fill="none" stroke="#555" stroke-width="0.45" /><rect x="306.10" y="22.30" width="5.8" height="2.8" rx="0.3" fill="#c01e36"/><path d="M307.6 27.8q0.5-1 1-0.1t1.8 0h1.4" fill="none" stroke="#555" stroke-width="0.45" /><path d="M307.6 26.2v1.8" fill="none" stroke="#555" stroke-width="0.45" /><rect x="315.20" y="22.30" width="5.8" height="2.8" rx="0.3" fill="#34a853"/><path d="M316.70000000000005 27.8q0.5-1 1-0.1t1.8 0h1.4" fill="none" stroke="#555" stroke-width="0.45" /><path d="M316.70000000000005 26.2v1.8" fill="none" stroke="#555" stroke-width="0.45" /><rect x="324.50" y="22.30" width="5.8" height="2.8" rx="0.3" fill="#e59a1c"/><path d="M326.0 27.8q0.5-1 1-0.1t1.8 0h1.4" fill="none" stroke="#555" stroke-width="0.45" /><path d="M326.0 26.2v1.8" fill="none" stroke="#555" stroke-width="0.45" /><rect x="5.20" y="35.30" width="6.8" height="2.6" rx="0.3" fill="#2d86b5"/><rect x="8.00" y="32.80" width="1.2" height="1.6" rx="0.4" fill="#3060a0"/><circle cx="8.6" cy="32.9" r="0.7" fill="#e0c040" /><rect x="14.20" y="35.30" width="6.8" height="2.6" rx="0.3" fill="#a8a8a8"/><rect x="17.00" y="32.80" width="1.2" height="1.6" rx="0.4" fill="#a8a8a8"/><circle cx="17.6" cy="32.9" r="0.7" fill="#a8a8a8" /><rect x="23.30" y="35.30" width="6.8" height="2.6" rx="0.3" fill="#2d86b5"/><rect x="26.10" y="32.80" width="1.2" height="1.6" rx="0.4" fill="#3060a0"/><circle cx="26.7" cy="32.9" r="0.7" fill="#e0c040" /><rect x="32.60" y="35.30" width="6.8" height="2.6" rx="0.3" fill="#a8a8a8"/><rect x="35.40" y="32.80" width="1.2" height="1.6" rx="0.4" fill="#a8a8a8"/><circle cx="36" cy="32.9" r="0.7" fill="#a8a8a8" /><rect x="42.30" y="32.60" width="6.6" height="5.4" rx="0.3" fill="#2d86b5"/><rect x="43.10" y="34.10" width="5" height="2.4" rx="0" fill="#eef3f8"/><rect x="47.50" y="34.10" width="1" height="2.4" rx="0" fill="#c03040"/><rect x="51.10" y="32.60" width="6.6" height="5.4" rx="0.3" fill="#c2c2c2"/><rect x="51.90" y="34.10" width="5" height="2.4" rx="0" fill="#f0f0f0"/><circle cx="63.6" cy="35.4" r="3.1" fill="#55aaa8" /><circle cx="63.6" cy="35.4" r="1.8" fill="#9fd6d0" /><circle cx="63.6" cy="35.4" r="0.9" fill="#1f6f9c" /><circle cx="72.8" cy="35.4" r="3.1" fill="#a5a5a5" /><path d="M71.4 35.4h2.8" fill="none" stroke="#c8c8c8" stroke-width="0.5" /><rect x="78.70" y="32.80" width="6.6" height="5.6" rx="0.6" fill="#a3a3a3"/><rect x="79.60" y="34.50" width="3.6" height="3.4" rx="0" fill="#ececec"/><path d="M81.4 35v2.2" fill="none" stroke="#888" stroke-width="0.6" /><rect x="87.90" y="32.80" width="6.6" height="5.6" rx="0.6" fill="#a3a3a3"/><rect x="88.80" y="34.50" width="3.6" height="3.4" rx="0" fill="#ececec"/><path d="M90.60000000000001 35v2.2" fill="none" stroke="#888" stroke-width="0.6" /><path d="M101.2 32.4L106.6 38.2M106.6 32.4L101.2 38.2" fill="none" stroke="#a0a0a0" stroke-width="0.8" /><rect x="109.60" y="34.50" width="6.4" height="3.6" rx="0.6" fill="#b5b5b5"/><rect x="110.50" y="34.90" width="4.6" height="1" rx="0" fill="#e6e6e6"/><rect x="120.40" y="32.20" width="3.6" height="6.4" rx="0.8" fill="#8aaab8"/><rect x="121.50" y="33.10" width="1.4" height="4.6" rx="0" fill="#c8dce4"/><path d="M128.3 37.8q2.9-5.4 5.8 0" fill="none" stroke="#2a6f9a" stroke-width="1.5" /><rect x="137.40" y="32.30" width="5.8" height="6.2" rx="0.7" fill="#3a8cbf"/><rect x="139.00" y="34.20" width="2.6" height="2.8" rx="0" fill="#f4f8fb"/><rect x="137.40" y="32.20" width="5.8" height="1.2" rx="0.4" fill="#6a7a84"/><circle cx="149.3" cy="35.4" r="2.8" fill="none" stroke="#4e6a82" stroke-width="1.3"/><path d="M147.4 33.6L151.2 37.2" fill="none" stroke="#5aa0d0" stroke-width="1.1" /><path d="M155.8 32.8l2.8 0.6v5.4l-2.8-0.8z" fill="#2d6fa0" /><path d="M158.6 33.4l2.8-1v5.6l-2.8 0.8z" fill="#f4f6f8" stroke="#4a5560" stroke-width="0.5"/><path d="M155.8 32.8l2.8 0.6v5.4l-2.8-0.8z" fill="none" stroke="#2a4a60" stroke-width="0.5" /><ellipse cx="167.6" cy="35.4" rx="3.6" ry="2.2" fill="#dde8e4" stroke="#c8c0a0" stroke-width="0.8"/><circle cx="167.6" cy="35.4" r="1.1" fill="#9ccde0" /><path d="M176 32.2l3.4 6h-6.8z" fill="#3a9cbc" /><path d="M176 34.4l1.4 2.6h-2.8z" fill="#e8f4f8" /><path d="M189.6 33.2v4.4" fill="none" stroke="#b0b0b0" stroke-width="0.6" /><path d="M196 33v4.6M198.2 33v4.6M200.4 33v4.6M195.6 35.3h5.2" fill="none" stroke="#a8a8a8" stroke-width="0.6" /><path d="M205.6 37.6v-3M208 37.6v-3.6M210.4 37.6v-4.4" fill="none" stroke="#d8d8d8" stroke-width="0.6" /><path d="M214.6 35.3h5.2" fill="none" stroke="#8e8e8e" stroke-width="0.8" /><rect x="223.00" y="32.60" width="6" height="5.6" rx="0.3" fill="#a8a8a8"/><rect x="232.20" y="32.60" width="6" height="5.6" rx="0.3" fill="#a8a8a8"/><path d="M232.2 35.4h6M235.2 32.6v5.6" fill="none" stroke="#e8e8ec" stroke-width="0.6" /><rect x="241.70" y="32.60" width="3" height="5.6" rx="0.2" fill="#a8a8a8"/><path d="M245 34h2.4M245 36.4h2.4" fill="none" stroke="#a0a0a0" stroke-width="0.8" /><rect x="251.1" y="32.7" width="5.6" height="5.4" fill="#f6f6f6" stroke="#c8c8c8" stroke-width="0.6"/><path d="M252.6 35.4h2.6" fill="none" stroke="#aaa" stroke-width="0.6" /><rect x="260.00" y="32.60" width="5.8" height="5.6" rx="0.3" fill="#3c95c8"/><path d="M262.9 33.4v4" fill="none" stroke="#c7e4f4" stroke-width="0.7" /><rect x="268.70" y="32.40" width="6.4" height="6" rx="0.3" fill="#3c95c8"/><path d="M270 32.6v5.6M273 32.6v5.6M269 34.4h6M269 36.4h6" fill="none" stroke="#c7e4f4" stroke-width="0.5" /><rect x="278.10" y="32.60" width="6" height="5.6" rx="0.3" fill="#3c95c8"/><path d="M280 35.4l1.6-1.2v2.4z" fill="#e4f2fa" /><path d="M290.3 32.2l2.2 2.2h-1.2v2h1.2l-2.2 2.4-2.2-2.4h1.2v-2h-1.2z" fill="#b0b0b0" /><path d="M297.6 32.6v5.6M300.8 32.6v5.6M296.6 33.8h2M299.8 33.8h2M296.6 37h2M299.8 37h2" fill="none" stroke="#b0b0b0" stroke-width="0.7" /><rect x="308.90" y="33.10" width="6.2" height="5" rx="0.4" fill="#a8a8a8"/><rect x="309.80" y="32.50" width="2.4" height="1.2" rx="0.2" fill="#a8a8a8"/><path d="M319.2 33l2-1.2 2.2 1.2 1 2.4-1 2.4-2.2 1.2-2-1.2-1-2.4z" fill="#a8a8a8" /><path d="M327 38.2q3.3-5 6.6 0z" fill="#a8a8a8" /><path d="M336 38.2l2.2-4 1.2 1.6 1.4-2.4 2.2 4.8z" fill="#a8a8a8" /><path d="M345.4 38.2l1.4-3.4h5.2v3.4z" fill="#a8a8a8" /><circle cx="358.1" cy="33.4" r="0.9" fill="#a8a8a8" /><path d="M355.6 38.2l1.6-3h1.8l1.6 3z" fill="#a8a8a8" /><path d="M364.4 38.2v-3.2q0-2.6 3.1-2.6t3.1 2.6v3.2" fill="none" stroke="#a0a0a0" stroke-width="0.9" stroke-dasharray="1 0.5"/><path d="M372.9 38.2v-3.8l3.5-2.6 3.5 2.6v3.8z" fill="#a0a0a0" /><path d="M382.4 33l6 5.2M388.4 33l-6 5.2" fill="none" stroke="#a8a8a8" stroke-width="0.9" /><circle cx="385.4" cy="36" r="1.5" fill="#b8b8b8" /><rect x="25.20" y="52.55" width="6.8" height="7" rx="0.4" fill="#dca030"/><path d="M26.6 54.2h3.6v3.4l-1.6-1.2M27.2 58.4h3.6" fill="none" stroke="#f8e0a0" stroke-width="0.7" /><rect x="37.70" y="52.55" width="6.8" height="7" rx="0.4" fill="#a8281c"/><path d="M38.6 58.6l1.8-2.6 1.4 1.4 2-3v4.2z" fill="#e05040" /><path d="M39.4 54.4h1.6" fill="none" stroke="#f0a090" stroke-width="0.6" /><rect x="46.80" y="52.55" width="6.8" height="7" rx="0.4" fill="#3c2a5c"/><path d="M47.6 58.4l4.8-4.8M49 58.6l4-4M47.8 56.4l3-3" fill="none" stroke="#9a80c0" stroke-width="0.6" stroke-dasharray="0.7 0.5"/><rect x="54.9" y="51.4" width="9.7" height="9.35" fill="#cfe6fa" stroke="#78b8ec" stroke-width="0.7"/><rect x="56.40" y="52.90" width="6.4" height="6.4" rx="0.3" fill="#26302e"/><path d="M57.2 58.4l2.2-3.4 2.2 3.4z" fill="none" stroke="#70c0e0" stroke-width="0.6"/><circle cx="57.6" cy="58" r="0.9" fill="#e8c830" /><circle cx="61.4" cy="58" r="0.9" fill="#40c050" /><rect x="65.70" y="52.75" width="6.4" height="6.6" rx="0.3" fill="#2a6a78"/><rect x="67.70" y="53.80" width="2.4" height="2.4" rx="1" fill="#dfeff2"/><path d="M66.4 58.2h5" fill="none" stroke="#dfeff2" stroke-width="0.6" /><path d="M67.2 57.2v2M70.6 57.2v2" fill="none" stroke="#a8d0d8" stroke-width="0.5" /><rect x="74.70" y="52.75" width="6.4" height="6.6" rx="0.3" fill="#2d8ec8"/><path d="M75.4 54l5 4.2M80.4 54l-5 4.2" fill="none" stroke="#cfe9f8" stroke-width="0.6" /><rect x="77.00" y="55.15" width="1.8" height="1.8" rx="0.3" fill="#9fd6f2"/><rect x="83.70" y="52.65" width="6.8" height="6.8" rx="0.3" fill="#e8701a"/><path d="M84.6 58.4l2.6-3 1.2 1.2 2-2.6M88.6 53.6v5" fill="none" stroke="#ffd6a8" stroke-width="0.6" /><circle cx="99.7" cy="56.1" r="3.4" fill="#d98a4a" stroke="#9a5a7a" stroke-width="0.7"/><circle cx="98.4" cy="54.9" r="0.55" fill="#f6d040" /><circle cx="101" cy="54.9" r="0.55" fill="#f6d040" /><circle cx="98.4" cy="57.3" r="0.55" fill="#f6d040" /><circle cx="101" cy="57.3" r="0.55" fill="#f6d040" /><rect x="3.10" y="47.70" width="5.4" height="5.4" rx="0.4" fill="#2a7fae"/><rect x="3.60" y="49.00" width="3.6" height="3.6" rx="0.2" fill="#6cbade"/><path d="M3.0999999999999996 47.699999999999996l1-1h5.4l-1 1" fill="none" stroke="#8fc8e6" stroke-width="0.6" /><rect x="3.30" y="56.10" width="5" height="6" rx="1.4" fill="#2a7fae"/><ellipse cx="5.8" cy="57.300000000000004" rx="2.5" ry="1.1" fill="#6cbade"/><path d="M5.8 64.89999999999999l2.8 5.2q-2.8 1.6-5.6 0z" fill="#2a7fae" /><path d="M5.8 64.89999999999999l-0.2 5.8q-1.4-0.2-2.6-0.6z" fill="#6cbade" /><path d="M5.8 74.1l3.2 5.8h-6.4z" fill="#2a7fae" /><path d="M5.8 74.1l0.8 5.8h-4z" fill="#6cbade" /><circle cx="5.8" cy="86.5" r="3" fill="#2a7fae" /><path d="M2.8 86.5h6M5.8 83.5v6" fill="none" stroke="#8fd0ee" stroke-width="0.5" /><ellipse cx="5.8" cy="95.8" rx="3.4" ry="2" transform="rotate(-35 5.8 95.8)" fill="#2a7fae"/><path d="M3.8 96.8l4-2.2" fill="none" stroke="#8fd0ee" stroke-width="0.6" /><ellipse cx="5.8" cy="104.7" rx="3.2" ry="1.9" fill="#8a9aa3"/><ellipse cx="5.8" cy="104.7" rx="1.6" ry="0.7" fill="#e8e8ee"/><path d="M5.8 111l3 5.6h-6z" fill="none" stroke="#707070" stroke-width="0.7" /><path d="M5.8 112.8v2" fill="none" stroke="#707070" stroke-width="0.6" /><rect x="3.00" y="124.30" width="5.6" height="4.6" rx="0.3" fill="#2a7fae"/><path d="M3.0 124.3h5.6" fill="none" stroke="#8fd0ee" stroke-width="0.5" /><circle cx="5.8" cy="135.2" r="3" fill="#2a7fae" /><circle cx="5.2" cy="134.6" r="1.2" fill="#6cbade" /><path d="M2.8 141.6h6l-3 5.6z" fill="#2a7fae" /><ellipse cx="5.8" cy="153" rx="3.4" ry="1.2" fill="#2a7fae"/><path d="M2.8 166.20000000000002v-5.8l6 5.8z" fill="#2a7fae" /><path d="M2.8 166.20000000000002h6" fill="none" stroke="#8fd0ee" stroke-width="0.5" /><path d="M5.8 169.2l2.4 5.4h-4.8z" fill="#2a7fae" /><path d="M5.8 178.2l2.8 1.5v3l-2.8 1.5-2.8-1.5v-3z" fill="#2a7fae" /><ellipse cx="5.8" cy="190.4" rx="3.2" ry="2.4" fill="#2a7fae"/><ellipse cx="6.3" cy="190.4" rx="1.4" ry="0.9" fill="#6cbade"/><path d="M5.8 196.5l0.9 2.2h2.3l-1.8 1.4 0.7 2.3-2.1-1.4-2.1 1.4 0.7-2.3-1.8-1.4h2.3z" fill="#2a7fae" /><path d="M2.5999999999999996 208.4q1.6 1.4 3.2 0t3.2 0v2q-1.6 2-3.2 1t-3.2-1z" fill="#2a7fae" /><path d="M2.8 222.4q1-4 3-2.4t3-1.6" fill="none" stroke="#2b7fb0" stroke-width="1.2" /><path d="M3.0 236.20000000000002l5.6-5.6" fill="none" stroke="#7a7a7a" stroke-width="0.6" /><circle cx="5.8" cy="242.7" r="2.7" fill="none" stroke="#7a7a7a" stroke-width="0.7"/><ellipse cx="5.8" cy="252" rx="2" ry="2.8" fill="none" stroke="#7a7a7a" stroke-width="0.7"/><path d="M3.4 258.4l2.4 5.2 2.4-5.2" fill="none" stroke="#7a7a7a" stroke-width="0.7" /><path d="M3.8 267.59999999999997v5.2h4.4" fill="none" stroke="#7a7a7a" stroke-width="0.7" /><circle cx="5.8" cy="279.7" r="2.6" fill="none" stroke="#8a8a8a" stroke-width="0.7"/><circle cx="6.2" cy="280.0" r="1.2" fill="none" stroke="#8a8a8a" stroke-width="0.6"/><circle cx="5.8" cy="289" r="2.4" fill="#b0b0b0" /><circle cx="5.8" cy="289" r="1.2" fill="#d8d8d8" /><path d="M3.0 299.6l1.6-3.4 2.4 0.6 1.6-1.6 0.6 2.6" fill="none" stroke="#3a7aa8" stroke-width="0.7" stroke-dasharray="0.9 0.5"/><path d="M2.8 310.0l1.6-1.8 1.6 0.6 1.4-2.4 1.4-1" fill="none" stroke="#3a7aa8" stroke-width="0.7" stroke-dasharray="0.8 0.6"/><path d="M3.0 313.6v6h5.8" fill="none" stroke="#3a6a90" stroke-width="0.7" /><path d="M3.8 318.20000000000005l1.6-2 1 1 2-2.6" fill="none" stroke="#3a8ac0" stroke-width="0.7" /><circle cx="5.8" cy="328.3" r="0.8" fill="#333" /><path d="M2.8 334.59999999999997h6l-3 5.6z" fill="none" stroke="#a8a8a8" stroke-width="0.7" /><path d="M4.199999999999999 336.2h3.2" fill="none" stroke="#b8b8b8" stroke-width="0.6" /><rect x="13.70" y="49.80" width="4" height="2.8" rx="0.6" fill="#1e4e6e"/><rect x="16.60" y="48.20" width="2.6" height="1.6" rx="0.3" fill="#3aa0d0"/><rect x="14.10" y="50.00" width="1.6" height="1.2" rx="0" fill="#d8dde0"/><rect x="13.70" y="58.15" width="4" height="2.8" rx="0.6" fill="#1e4e6e"/><rect x="16.60" y="56.55" width="2.6" height="1.6" rx="0.3" fill="#3aa0d0"/><rect x="14.10" y="58.35" width="1.6" height="1.2" rx="0" fill="#d8dde0"/><rect x="13.70" y="65.90" width="5.2" height="5.2" rx="0.3" fill="#1f6fa0"/><rect x="14.20" y="67.60" width="3" height="3" rx="0.2" fill="#7fc0e0"/><circle cx="18.5" cy="66.3" r="0.9" fill="#1a1a1a" /><path d="M13.5 77.5q1.4-1.6 2.8 0t2.8 0" fill="none" stroke="#555" stroke-width="0.8" /><path d="M13.3 91.89999999999999l2.6-5.2 0.6 2.2 2.8 3z" fill="#2b7fb0" /><rect x="16.00" y="87.20" width="1" height="3" rx="0.3" fill="#e0b030"/><path d="M13.700000000000001 94.4l5.2 5.2M18.900000000000002 94.4l-5.2 5.2M16.3 94v6M13.3 97h6" fill="none" stroke="#3a8ac0" stroke-width="0.6" stroke-dasharray="0.8 0.5"/><rect x="13.50" y="103.20" width="2.6" height="2.6" rx="0.2" fill="#3a8cbf"/><rect x="16.50" y="106.20" width="2.6" height="2.6" rx="0.2" fill="#3a8cbf"/><rect x="16.3" y="103.2" width="2.6" height="2.6" fill="#fff" stroke="#888" stroke-width="0.4"/><rect x="13.5" y="106" width="2.6" height="2.6" fill="#fff" stroke="#888" stroke-width="0.4"/><rect x="15.50" y="112.20" width="3.6" height="3.6" rx="0.3" fill="#3a8cbf"/><rect x="13.5" y="114.4" width="3.6" height="3.6" fill="#eef" stroke="#3a8cbf" stroke-width="0.5"/><rect x="14.80" y="121.30" width="4.2" height="4.2" rx="0.3" fill="#4a7aa8"/><rect x="13.60" y="123.30" width="3.4" height="3.4" rx="0.3" fill="#3a9ad0"/><rect x="14.80" y="130.30" width="4.2" height="4.2" rx="0.3" fill="#4a7aa8"/><rect x="13.60" y="132.30" width="3.4" height="3.4" rx="0.3" fill="#3a9ad0"/><rect x="13.9" y="136.79999999999998" width="4.8" height="5.6" fill="#f8f8f8" stroke="#777" stroke-width="0.5"/><rect x="14.70" y="139.40" width="2" height="1.6" rx="0" fill="#3a86c0"/><path d="M16.3 148v6M13.3 151h6M14.200000000000001 148.9l4.2 4.2M18.400000000000002 148.9l-4.2 4.2" fill="none" stroke="#2b7fb0" stroke-width="0.5" /><circle cx="16.3" cy="151" r="1" fill="#2b7fb0" /><circle cx="16.3" cy="159.2" r="2.8" fill="#9aa3aa" /><circle cx="16.3" cy="159.2" r="1.4" fill="#dfe4e8" /><path d="M13.700000000000001 169.1l5-5" fill="none" stroke="#222" stroke-width="1.3" /><path d="M13.700000000000001 169.1l0.8-0.8" fill="none" stroke="#c0a060" stroke-width="1.2" /><path d="M13.700000000000001 180.29999999999998v-3l2-2h3.2v5z" fill="#2b7fb0" /><rect x="16.10" y="177.30" width="2" height="2.4" rx="0" fill="#bfe0f0"/><path d="M16.3 181.9l2.6 5h-5.2z" fill="#5aa0c8" /><rect x="13.70" y="186.60" width="5.2" height="1" rx="0.3" fill="#888"/><rect x="13.50" y="190.80" width="5.6" height="5" rx="0.4" fill="#2b7fb0"/><rect x="14.20" y="191.40" width="2.6" height="2.2" rx="0" fill="#8cc8e8"/><path d="M13.100000000000001 204.4q0-4.8 3.2-4.8t3.2 4.8z" fill="#2b7fb0" /><path d="M12.9 213.0q1.4-3 3-1.6t3.8-1.4v2q-2 1.8-3.8 1.2t-3 1.4z" fill="#2b7fb0" /><path d="M15.3 218.6q4 3 0 6q2-3 0-6z" fill="#2b7fb0" /><rect x="13.30" y="228.70" width="6" height="3" rx="1.5" fill="#2b7fb0"/><path d="M13.3 243.0q1-5 5-5.2q-2 2-1 5.2z" fill="#2b7fb0" /><path d="M13.3 248.9h6q-0.6 3-3 3t-3-3z" fill="#2b7fb0" /><path d="M15.700000000000001 245.9l1 2.4" fill="none" stroke="#2b7fb0" stroke-width="0.7" /><path d="M16.3 257l2.7 1.5v3l-2.7 1.5-2.7-1.5v-3z" fill="none" stroke="#2b7fb0" stroke-width="0.9"/><circle cx="16.3" cy="260" r="1" fill="#2b7fb0" /><rect x="13.50" y="268.10" width="5.6" height="5" rx="0.4" fill="#2b7fb0"/><rect x="14.20" y="268.70" width="2.6" height="2.2" rx="0" fill="#8cc8e8"/><path d="M13.700000000000001 279.6l1.6-3.6 3 1.2 0.6 3.6-2.6 0.6z" fill="none" stroke="#3a7aa8" stroke-width="0.6" stroke-dasharray="0.8 0.5"/><path d="M13.3 290.3l1.6-5 4.4 2.4 1 2.6z" fill="#2b7fb0" /><path d="M14.3 285.9l4 3.6" fill="none" stroke="#8cc8e8" stroke-width="0.5" /><rect x="13.80" y="294.00" width="5" height="6" rx="2.4" fill="#2b7fb0"/><circle cx="16.3" cy="295.8" r="0.9" fill="#cfe8f5" /><circle cx="16.3" cy="298.2" r="0.9" fill="#cfe8f5" /><path d="M16.3 304.2l2.2 2.4h-1.3v3.6h-1.8v-3.6h-1.3z" fill="#2b7fb0" /><circle cx="16.3" cy="316.6" r="2.6" fill="none" stroke="#b8c8d0" stroke-width="0.6"/><path d="M14.9 317.6l2.8-2" fill="none" stroke="#b8c8d0" stroke-width="0.5" /><path d="M12.9 330l2.6-3.2h4.2l-2.6 3.2z" fill="#2b7fb0" /><path d="M12.9 330v1h4.2l2.6-3.2v-1z" fill="#1a5a80" /><path d="M13.100000000000001 341.5h6.4" fill="none" stroke="#4a7aa8" stroke-width="1.2" stroke-dasharray="1.2 0.4"/><path d="M13.100000000000001 339.7h6.4" fill="none" stroke="#c8ccd4" stroke-width="0.6" /><path d="M13.3 352.9h6M13.3 352.9l3-5" fill="none" stroke="#444" stroke-width="0.6" /><rect x="13.50" y="351.60" width="2.4" height="1" rx="0" fill="#3a8ac0"/><path d="M13.3 362.8v-5.6q4 1 6 5.6z" fill="#2b7fb0" /><rect x="13.30" y="362.30" width="6" height="1" rx="0" fill="#666"/><rect x="791.60" y="57.70" width="6" height="4.6" rx="0.4" fill="#3a86b0"/><rect x="792.40" y="59.30" width="4.4" height="2.2" rx="0" fill="#eaf4fa"/><ellipse cx="794.6" cy="69" rx="3" ry="1.8" fill="#a8acb0"/><rect x="792.50" y="75.90" width="5" height="5" rx="1.2" fill="#2f7eab"/><rect x="792.30" y="77.90" width="3" height="3" rx="0.6" fill="#1f5f88"/><path d="M792.6 76.4h3.6" fill="none" stroke="#8cc8e8" stroke-width="0.6" /><rect x="792.4" y="84.6" width="4" height="3.2" rx="0.6" fill="none" stroke="#2f7eab" stroke-width="0.8"/><rect x="791.6" y="86.8" width="4" height="3" rx="0.6" fill="#eef4f8" stroke="#2f7eab" stroke-width="0.8"/><path d="M792 94.4h5.4M792 96.4h5.4M792 98.4h5.4" fill="none" stroke="#3a86b0" stroke-width="1.0" /><circle cx="794.6" cy="105.3" r="2.6" fill="#2f7eab" /><circle cx="795.0" cy="105.8" r="1.4" fill="#9fd0ea" /><path d="M792 103.2l1 1" fill="none" stroke="#555" stroke-width="0.6" /><path d="M790.8 130l1 0.6" fill="none" stroke="#888" stroke-width="0.5" /><rect x="792.4" y="124.6" width="4.2" height="5" fill="#f4f8fa" stroke="#2f7eab" stroke-width="0.8"/><rect x="792" y="133" width="4.6" height="5" fill="#eef4f8" stroke="#555" stroke-width="0.6"/><path d="M792 133l4.6 5" fill="none" stroke="#2f7eab" stroke-width="0.7" /><path d="M792.2 146.8l4.4-4.4" fill="none" stroke="#2f7eab" stroke-width="1.1" /><circle cx="792.6" cy="146.6" r="0.9" fill="#555" /><rect x="792.10" y="152.50" width="5" height="4.8" rx="0.4" fill="#2f7eab"/><rect x="794.30" y="154.70" width="2.6" height="2.4" rx="0" fill="#dfeef6"/><path d="M792.2 161.6l2 2 2.6-2.6" fill="none" stroke="#2f7eab" stroke-width="0.8" /><rect x="793.40" y="164.60" width="3.6" height="1.6" rx="0.2" fill="#7fb8d8"/><rect x="792.6" y="170" width="4" height="5.4" rx="0.4" fill="#e8f2f8" stroke="#3a86b0" stroke-width="0.8"/><path d="M792.8 183.2l3.8 2.2-3.8 2.2z" fill="#1f6e9e" /></svg>
</body></html>
